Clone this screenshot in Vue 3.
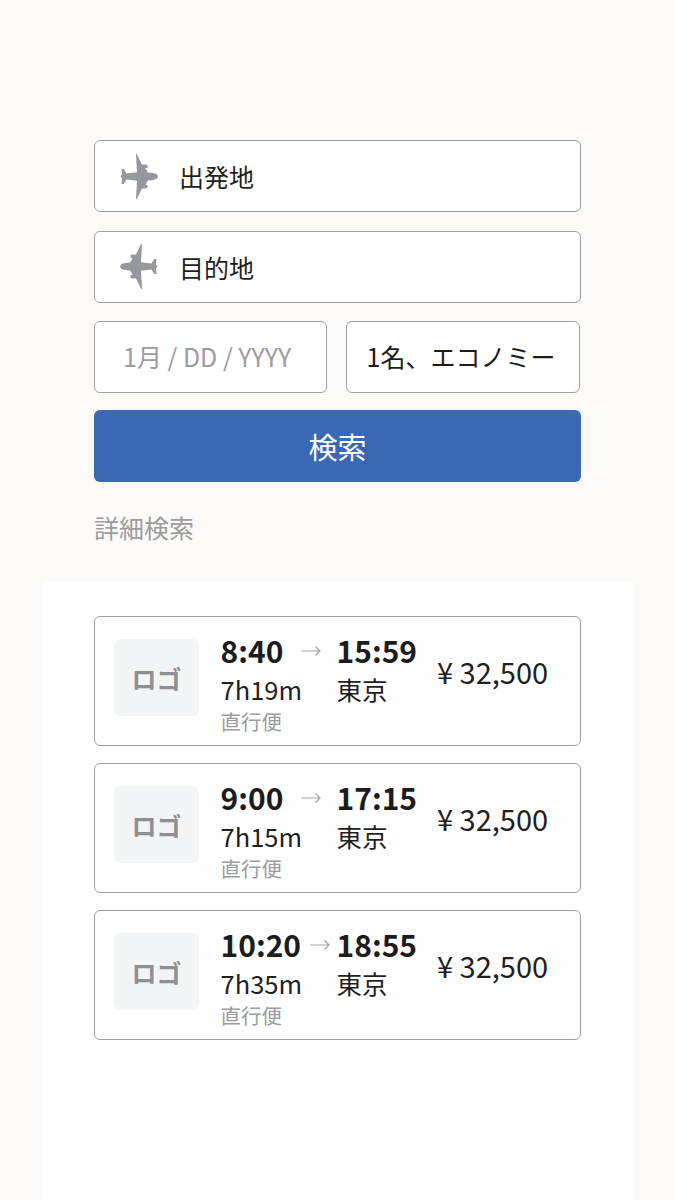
<script setup>
const flights = [
  { dep: "8:40", arr: "15:59", duration: "7h19m" },
  { dep: "9:00", arr: "17:15", duration: "7h15m" },
  { dep: "10:20", arr: "18:55", duration: "7h35m" },
];
</script>

<template>
  <div class="page">
    <form class="search" @submit.prevent>
      <div class="field place">
        <svg class="plane" viewBox="0 0 38 45"><use href="#plane-shape" /></svg>
        <span>出発地</span>
      </div>
      <div class="field place">
        <svg class="plane flip" viewBox="0 0 38 45"><use href="#plane-shape" /></svg>
        <span>目的地</span>
      </div>
      <div class="row">
        <div class="field date">1月 / DD / YYYY</div>
        <div class="field seat">1名、エコノミー</div>
      </div>
      <button class="submit" type="submit">検索</button>
      <a class="more" href="#">詳細検索</a>
    </form>

    <section class="results">
      <article v-for="f in flights" :key="f.dep" class="card">
        <div class="logo">ロゴ</div>
        <div class="info">
          <div class="times">
            <span class="dep">{{ f.dep }}</span>
            <span class="arrow">
              <svg width="20" height="12" viewBox="0 0 20 12"><path d="M0 6h19M14.500 1.500l4.500 4.500-4.500 4.500" /></svg>
            </span>
            <span class="arr">{{ f.arr }}</span>
          </div>
          <div class="sub">
            <span class="duration">{{ f.duration }}</span>
            <span class="city">東京</span>
          </div>
          <div class="note">直行便</div>
        </div>
        <div class="price">¥ 32,500</div>
      </article>
    </section>

    <svg width="0" height="0" class="defs">
      <defs>
        <path id="plane-shape" d="M38 22.500C38 20.800 36 19.400 33 19L28 18.500 25.300 14.200 27.500 14 27.500 10.800 22 10.500 16.800 0 16 0 17 18.200 6.500 19.500 3.800 15 1.500 15 2 20.300 0.500 22.500 2 24.700 1.500 30 3.800 30 6.500 25.500 17 26.800 16 45 16.800 45 22 34.500 27.500 34.200 27.500 31 25.300 30.800 28 26.500 33 26C36 25.600 38 24.200 38 22.500Z" />
      </defs>
    </svg>
  </div>
</template>

<style>
html,
body {
  margin: 0;
  background: #fbfaf9;
}
</style>

<style scoped>
.page {
  height: 1200px;
  overflow: hidden;
  background: #fbfaf9;
  font-family: "Noto Sans CJK JP", "Noto Sans", sans-serif;
  color: #1f1f1f;
  padding-top: 140px;
  box-sizing: border-box;
}

.search {
  margin: 0 94px;
  display: flex;
  flex-direction: column;
}

.field {
  height: 72px;
  box-sizing: border-box;
  display: flex;
  align-items: center;
  background: #fff;
  border: 1px solid #9f9fa2;
  border-radius: 6px;
  font-size: 25px;
}

.place {
  margin-bottom: 18.500px;
  padding-left: 25px;
}

.plane {
  width: 38px;
  height: 45px;
  margin-right: 21px;
  fill: #97989d;
}

.flip {
  transform: scaleX(-1);
}

.defs {
  position: absolute;
}

.row {
  display: flex;
  gap: 19px;
  margin-right: 1px;
}

.date {
  width: 233px;
  padding-left: 28px;
  padding-bottom: 2px;
  color: #9b9c9f;
}

.seat {
  flex: 1;
  padding-left: 19.500px;
  padding-bottom: 2px;
  color: #1c1c1c;
}

.submit {
  height: 72px;
  margin-top: 17px;
  border: 0;
  border-radius: 6px;
  background: #3b68b5;
  color: #fff;
  font: inherit;
  font-size: 29px;
}

.more {
  margin-top: 29px;
  margin-bottom: 1px;
  color: #9b9c9f;
  font-size: 25px;
  line-height: 32px;
  text-decoration: none;
}

.results {
  margin: 37px 42px 0;
  padding: 35px 52px 0;
  height: 640px;
  background: #fefefe;
  display: flex;
  flex-direction: column;
  gap: 17px;
}

.card {
  height: 130px;
  box-sizing: border-box;
  display: flex;
  align-items: flex-start;
  border: 1px solid #9f9fa2;
  border-radius: 6px;
  padding: 22px 0 0 19px;
}

.logo {
  width: 85px;
  height: 77px;
  display: flex;
  align-items: center;
  justify-content: center;
  background: #f3f4f6;
  border-radius: 6px;
  color: #8e8f93;
  font-size: 25px;
  font-weight: 700;
}

.info {
  width: 196px;
  margin-left: 21.500px;
  margin-top: -7px;
}

.times {
  display: flex;
  align-items: center;
  font-size: 30px;
  font-weight: 700;
  line-height: 36px;
  color: #1c1c1c;
}

.arrow {
  flex: 1;
  display: flex;
  justify-content: center;
  padding-left: 3px;
  padding-top: 1px;
}

.arrow svg {
  fill: none;
  stroke: #a3a3a6;
  stroke-width: 1.2;
}

.arr {
  width: 80px;
}

.sub {
  display: flex;
  font-size: 25.500px;
  line-height: 40px;
  margin-top: 1px;
}

.duration {
  width: 116px;
}

.note {
  font-size: 20.500px;
  line-height: 24px;
  color: #9b9c9f;
}

.price {
  margin-left: 20.500px;
  margin-top: 12px;
  font-size: 29px;
  line-height: 40px;
  white-space: nowrap;
}
</style>
